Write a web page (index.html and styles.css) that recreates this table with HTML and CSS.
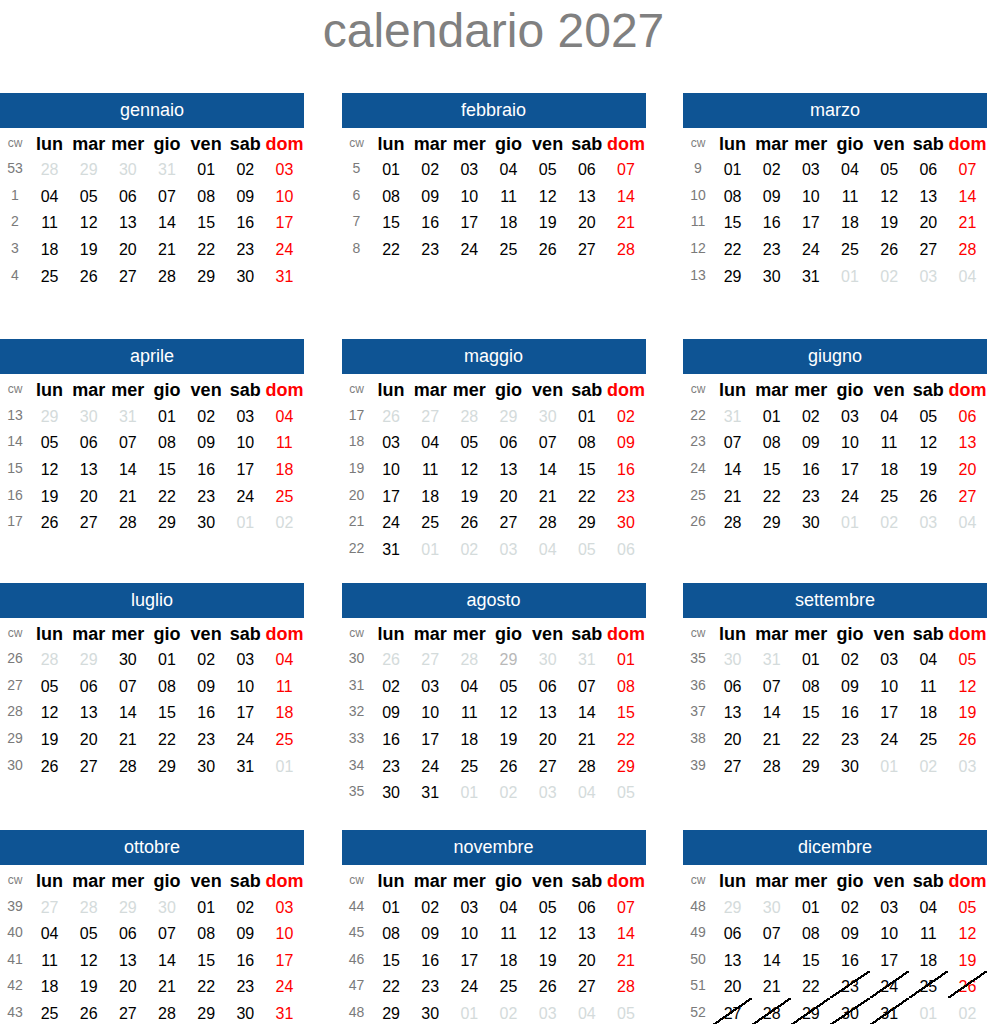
FILE: index.html
```html
<!DOCTYPE html>
<html lang="it">
<head>
<meta charset="utf-8">
<title>calendario 2027</title>
<link rel="stylesheet" href="styles.css">
</head>
<body>
<h1 class="title">calendario 2027</h1>
<div class="year">

<section class="m">
<div class="mh">gennaio</div>
<div class="g">
<span class="cwh">cw</span><span class="wd">lun</span><span class="wd">mar</span><span class="wd">mer</span><span class="wd">gio</span><span class="wd">ven</span><span class="wd">sab</span><span class="wd s">dom</span>
<span class="cw">53</span><span class="o">28</span><span class="o">29</span><span class="o">30</span><span class="o">31</span><span>01</span><span>02</span><span class="s">03</span>
<span class="cw">1</span><span>04</span><span>05</span><span>06</span><span>07</span><span>08</span><span>09</span><span class="s">10</span>
<span class="cw">2</span><span>11</span><span>12</span><span>13</span><span>14</span><span>15</span><span>16</span><span class="s">17</span>
<span class="cw">3</span><span>18</span><span>19</span><span>20</span><span>21</span><span>22</span><span>23</span><span class="s">24</span>
<span class="cw">4</span><span>25</span><span>26</span><span>27</span><span>28</span><span>29</span><span>30</span><span class="s">31</span>
</div>
</section>

<section class="m">
<div class="mh">febbraio</div>
<div class="g">
<span class="cwh">cw</span><span class="wd">lun</span><span class="wd">mar</span><span class="wd">mer</span><span class="wd">gio</span><span class="wd">ven</span><span class="wd">sab</span><span class="wd s">dom</span>
<span class="cw">5</span><span>01</span><span>02</span><span>03</span><span>04</span><span>05</span><span>06</span><span class="s">07</span>
<span class="cw">6</span><span>08</span><span>09</span><span>10</span><span>11</span><span>12</span><span>13</span><span class="s">14</span>
<span class="cw">7</span><span>15</span><span>16</span><span>17</span><span>18</span><span>19</span><span>20</span><span class="s">21</span>
<span class="cw">8</span><span>22</span><span>23</span><span>24</span><span>25</span><span>26</span><span>27</span><span class="s">28</span>
</div>
</section>

<section class="m">
<div class="mh">marzo</div>
<div class="g">
<span class="cwh">cw</span><span class="wd">lun</span><span class="wd">mar</span><span class="wd">mer</span><span class="wd">gio</span><span class="wd">ven</span><span class="wd">sab</span><span class="wd s">dom</span>
<span class="cw">9</span><span>01</span><span>02</span><span>03</span><span>04</span><span>05</span><span>06</span><span class="s">07</span>
<span class="cw">10</span><span>08</span><span>09</span><span>10</span><span>11</span><span>12</span><span>13</span><span class="s">14</span>
<span class="cw">11</span><span>15</span><span>16</span><span>17</span><span>18</span><span>19</span><span>20</span><span class="s">21</span>
<span class="cw">12</span><span>22</span><span>23</span><span>24</span><span>25</span><span>26</span><span>27</span><span class="s">28</span>
<span class="cw">13</span><span>29</span><span>30</span><span>31</span><span class="o">01</span><span class="o">02</span><span class="o">03</span><span class="o">04</span>
</div>
</section>

<section class="m">
<div class="mh">aprile</div>
<div class="g">
<span class="cwh">cw</span><span class="wd">lun</span><span class="wd">mar</span><span class="wd">mer</span><span class="wd">gio</span><span class="wd">ven</span><span class="wd">sab</span><span class="wd s">dom</span>
<span class="cw">13</span><span class="o">29</span><span class="o">30</span><span class="o">31</span><span>01</span><span>02</span><span>03</span><span class="s">04</span>
<span class="cw">14</span><span>05</span><span>06</span><span>07</span><span>08</span><span>09</span><span>10</span><span class="s">11</span>
<span class="cw">15</span><span>12</span><span>13</span><span>14</span><span>15</span><span>16</span><span>17</span><span class="s">18</span>
<span class="cw">16</span><span>19</span><span>20</span><span>21</span><span>22</span><span>23</span><span>24</span><span class="s">25</span>
<span class="cw">17</span><span>26</span><span>27</span><span>28</span><span>29</span><span>30</span><span class="o">01</span><span class="o">02</span>
</div>
</section>

<section class="m">
<div class="mh">maggio</div>
<div class="g">
<span class="cwh">cw</span><span class="wd">lun</span><span class="wd">mar</span><span class="wd">mer</span><span class="wd">gio</span><span class="wd">ven</span><span class="wd">sab</span><span class="wd s">dom</span>
<span class="cw">17</span><span class="o">26</span><span class="o">27</span><span class="o">28</span><span class="o">29</span><span class="o">30</span><span>01</span><span class="s">02</span>
<span class="cw">18</span><span>03</span><span>04</span><span>05</span><span>06</span><span>07</span><span>08</span><span class="s">09</span>
<span class="cw">19</span><span>10</span><span>11</span><span>12</span><span>13</span><span>14</span><span>15</span><span class="s">16</span>
<span class="cw">20</span><span>17</span><span>18</span><span>19</span><span>20</span><span>21</span><span>22</span><span class="s">23</span>
<span class="cw">21</span><span>24</span><span>25</span><span>26</span><span>27</span><span>28</span><span>29</span><span class="s">30</span>
<span class="cw">22</span><span>31</span><span class="o">01</span><span class="o">02</span><span class="o">03</span><span class="o">04</span><span class="o">05</span><span class="o">06</span>
</div>
</section>

<section class="m">
<div class="mh">giugno</div>
<div class="g">
<span class="cwh">cw</span><span class="wd">lun</span><span class="wd">mar</span><span class="wd">mer</span><span class="wd">gio</span><span class="wd">ven</span><span class="wd">sab</span><span class="wd s">dom</span>
<span class="cw">22</span><span class="o">31</span><span>01</span><span>02</span><span>03</span><span>04</span><span>05</span><span class="s">06</span>
<span class="cw">23</span><span>07</span><span>08</span><span>09</span><span>10</span><span>11</span><span>12</span><span class="s">13</span>
<span class="cw">24</span><span>14</span><span>15</span><span>16</span><span>17</span><span>18</span><span>19</span><span class="s">20</span>
<span class="cw">25</span><span>21</span><span>22</span><span>23</span><span>24</span><span>25</span><span>26</span><span class="s">27</span>
<span class="cw">26</span><span>28</span><span>29</span><span>30</span><span class="o">01</span><span class="o">02</span><span class="o">03</span><span class="o">04</span>
</div>
</section>

<section class="m">
<div class="mh">luglio</div>
<div class="g">
<span class="cwh">cw</span><span class="wd">lun</span><span class="wd">mar</span><span class="wd">mer</span><span class="wd">gio</span><span class="wd">ven</span><span class="wd">sab</span><span class="wd s">dom</span>
<span class="cw">26</span><span class="o">28</span><span class="o">29</span><span>30</span><span>01</span><span>02</span><span>03</span><span class="s">04</span>
<span class="cw">27</span><span>05</span><span>06</span><span>07</span><span>08</span><span>09</span><span>10</span><span class="s">11</span>
<span class="cw">28</span><span>12</span><span>13</span><span>14</span><span>15</span><span>16</span><span>17</span><span class="s">18</span>
<span class="cw">29</span><span>19</span><span>20</span><span>21</span><span>22</span><span>23</span><span>24</span><span class="s">25</span>
<span class="cw">30</span><span>26</span><span>27</span><span>28</span><span>29</span><span>30</span><span>31</span><span class="o">01</span>
</div>
</section>

<section class="m">
<div class="mh">agosto</div>
<div class="g">
<span class="cwh">cw</span><span class="wd">lun</span><span class="wd">mar</span><span class="wd">mer</span><span class="wd">gio</span><span class="wd">ven</span><span class="wd">sab</span><span class="wd s">dom</span>
<span class="cw">30</span><span class="o">26</span><span class="o">27</span><span class="o">28</span><span class="o2">29</span><span class="o">30</span><span class="o">31</span><span class="s">01</span>
<span class="cw">31</span><span>02</span><span>03</span><span>04</span><span>05</span><span>06</span><span>07</span><span class="s">08</span>
<span class="cw">32</span><span>09</span><span>10</span><span>11</span><span>12</span><span>13</span><span>14</span><span class="s">15</span>
<span class="cw">33</span><span>16</span><span>17</span><span>18</span><span>19</span><span>20</span><span>21</span><span class="s">22</span>
<span class="cw">34</span><span>23</span><span>24</span><span>25</span><span>26</span><span>27</span><span>28</span><span class="s">29</span>
<span class="cw">35</span><span>30</span><span>31</span><span class="o">01</span><span class="o">02</span><span class="o">03</span><span class="o">04</span><span class="o">05</span>
</div>
</section>

<section class="m">
<div class="mh">settembre</div>
<div class="g">
<span class="cwh">cw</span><span class="wd">lun</span><span class="wd">mar</span><span class="wd">mer</span><span class="wd">gio</span><span class="wd">ven</span><span class="wd">sab</span><span class="wd s">dom</span>
<span class="cw">35</span><span class="o">30</span><span class="o">31</span><span>01</span><span>02</span><span>03</span><span>04</span><span class="s">05</span>
<span class="cw">36</span><span>06</span><span>07</span><span>08</span><span>09</span><span>10</span><span>11</span><span class="s">12</span>
<span class="cw">37</span><span>13</span><span>14</span><span>15</span><span>16</span><span>17</span><span>18</span><span class="s">19</span>
<span class="cw">38</span><span>20</span><span>21</span><span>22</span><span>23</span><span>24</span><span>25</span><span class="s">26</span>
<span class="cw">39</span><span>27</span><span>28</span><span>29</span><span>30</span><span class="o">01</span><span class="o">02</span><span class="o">03</span>
</div>
</section>

<section class="m">
<div class="mh">ottobre</div>
<div class="g">
<span class="cwh">cw</span><span class="wd">lun</span><span class="wd">mar</span><span class="wd">mer</span><span class="wd">gio</span><span class="wd">ven</span><span class="wd">sab</span><span class="wd s">dom</span>
<span class="cw">39</span><span class="o">27</span><span class="o">28</span><span class="o">29</span><span class="o">30</span><span>01</span><span>02</span><span class="s">03</span>
<span class="cw">40</span><span>04</span><span>05</span><span>06</span><span>07</span><span>08</span><span>09</span><span class="s">10</span>
<span class="cw">41</span><span>11</span><span>12</span><span>13</span><span>14</span><span>15</span><span>16</span><span class="s">17</span>
<span class="cw">42</span><span>18</span><span>19</span><span>20</span><span>21</span><span>22</span><span>23</span><span class="s">24</span>
<span class="cw">43</span><span>25</span><span>26</span><span>27</span><span>28</span><span>29</span><span>30</span><span class="s">31</span>
</div>
</section>

<section class="m">
<div class="mh">novembre</div>
<div class="g">
<span class="cwh">cw</span><span class="wd">lun</span><span class="wd">mar</span><span class="wd">mer</span><span class="wd">gio</span><span class="wd">ven</span><span class="wd">sab</span><span class="wd s">dom</span>
<span class="cw">44</span><span>01</span><span>02</span><span>03</span><span>04</span><span>05</span><span>06</span><span class="s">07</span>
<span class="cw">45</span><span>08</span><span>09</span><span>10</span><span>11</span><span>12</span><span>13</span><span class="s">14</span>
<span class="cw">46</span><span>15</span><span>16</span><span>17</span><span>18</span><span>19</span><span>20</span><span class="s">21</span>
<span class="cw">47</span><span>22</span><span>23</span><span>24</span><span>25</span><span>26</span><span>27</span><span class="s">28</span>
<span class="cw">48</span><span>29</span><span>30</span><span class="o">01</span><span class="o">02</span><span class="o">03</span><span class="o">04</span><span class="o">05</span>
</div>
</section>

<section class="m">
<div class="mh">dicembre</div>
<div class="g">
<span class="cwh">cw</span><span class="wd">lun</span><span class="wd">mar</span><span class="wd">mer</span><span class="wd">gio</span><span class="wd">ven</span><span class="wd">sab</span><span class="wd s">dom</span>
<span class="cw">48</span><span class="o">29</span><span class="o">30</span><span>01</span><span>02</span><span>03</span><span>04</span><span class="s">05</span>
<span class="cw">49</span><span>06</span><span>07</span><span>08</span><span>09</span><span>10</span><span>11</span><span class="s">12</span>
<span class="cw">50</span><span>13</span><span>14</span><span>15</span><span>16</span><span>17</span><span>18</span><span class="s">19</span>
<span class="cw">51</span><span>20</span><span>21</span><span>22</span><span class="x">23</span><span class="x">24</span><span class="x">25</span><span class="s x">26</span>
<span class="cw">52</span><span class="x">27</span><span class="x">28</span><span class="x">29</span><span class="x">30</span><span class="x">31</span><span class="o">01</span><span class="o">02</span>
</div>
</section>

</div>
</body>
</html>
```

FILE: styles.css
```css
html, body {
  margin: 0;
  padding: 0;
  background: #ffffff;
}

body {
  font-family: "Liberation Sans", Arial, sans-serif;
  color: #000000;
  overflow: hidden;
}

.title {
  margin: 0;
  height: 92.7px;
  line-height: 62px;
  font-size: 48px;
  font-weight: normal;
  color: #808080;
  text-align: center;
}

.year {
  display: grid;
  grid-template-columns: repeat(3, 304px);
  column-gap: 37.5px;
  grid-template-rows: 246.6px 243.4px 247.3px auto;
}

.mh {
  height: 35px;
  line-height: 35px;
  background: #0e5494;
  color: #ffffff;
  text-align: center;
  font-size: 18px;
}

.g {
  display: grid;
  grid-template-columns: 30px repeat(7, 1fr);
  grid-auto-rows: 26.6px;
  margin-top: 3px;
  text-align: center;
  font-size: 16px;
  line-height: 26.6px;
}

.cw {
  font-size: 14px;
  line-height: 22px;
  color: #7a7a7a;
}

.cwh {
  font-size: 12px;
  line-height: 24px;
  color: #808080;
}

.wd {
  font-weight: bold;
  font-size: 18px;
}

.s {
  color: #ff0000;
}

.o {
  color: #d4dbdb;
}

.o2 {
  color: #b8b8b8;
}

.x {
  position: relative;
}

.x::after {
  content: "";
  position: absolute;
  left: 0;
  right: 0;
  top: -3px;
  bottom: 3px;
  background: linear-gradient(to bottom right,
    transparent calc(50% - 1.1px),
    #000 calc(50% - 1.1px),
    #000 calc(50% + 1.1px),
    transparent calc(50% + 1.1px));
}
```
